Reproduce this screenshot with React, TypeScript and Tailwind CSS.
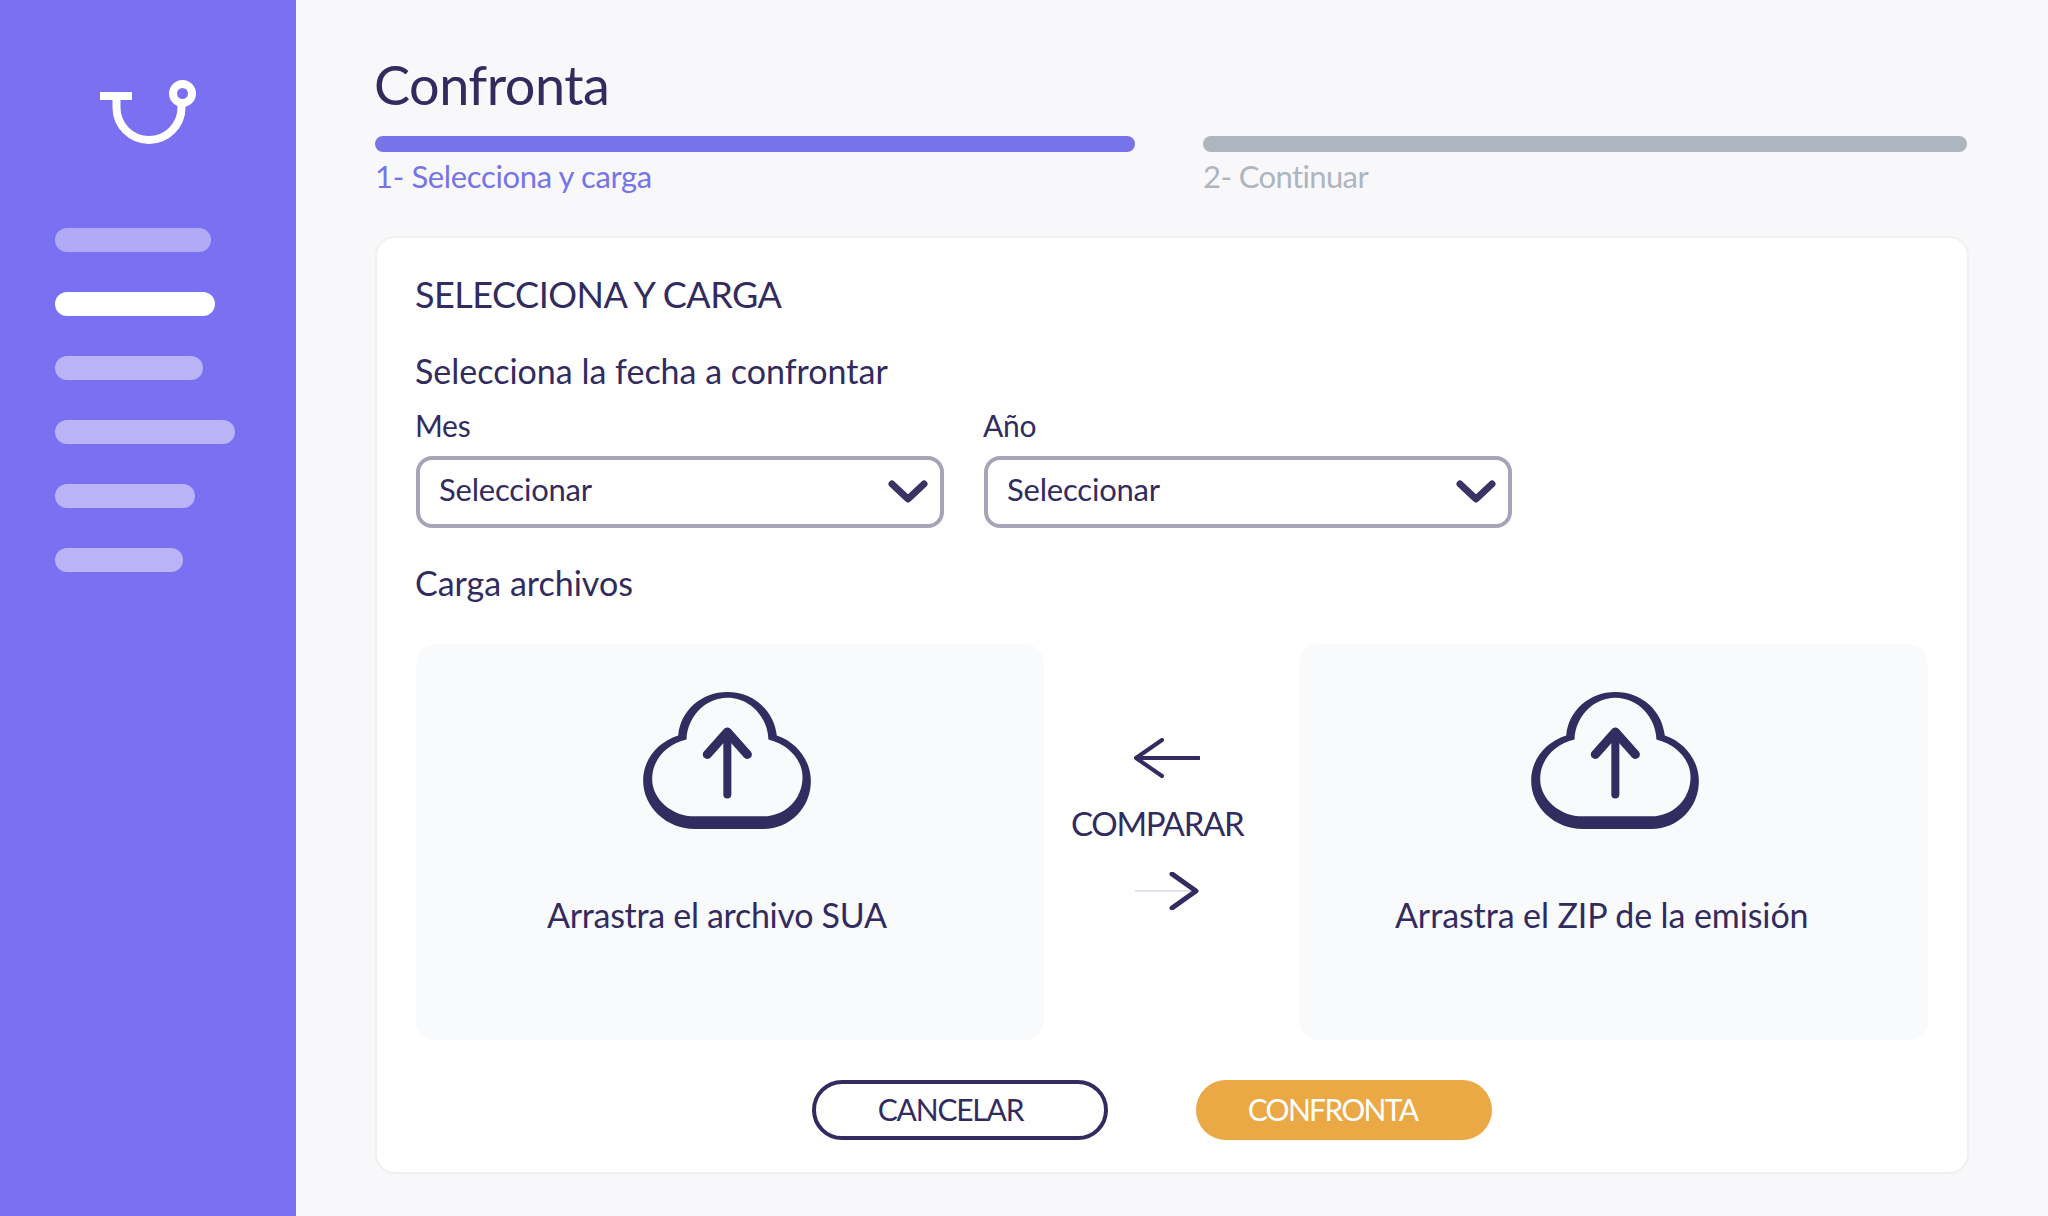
const navBars = [
  { width: 'w-[156px]', color: 'bg-[#b1aaf6]' },
  { width: 'w-[160px]', color: 'bg-white' },
  { width: 'w-[148px]', color: 'bg-[#bab4f7]' },
  { width: 'w-[180px]', color: 'bg-[#bab4f7]' },
  { width: 'w-[140px]', color: 'bg-[#bab4f7]' },
  { width: 'w-[128px]', color: 'bg-[#bab4f7]' },
];

const Logo = () => (
  <svg width="96" height="64" viewBox="100 80 96 64" fill="none">
    <rect x="100" y="92" width="32" height="8" fill="#fff" />
    <path d="M116.5 96V107.5A32.5 32.5 0 0 0 181.5 107.5V103" stroke="#fff" strokeWidth="8" />
    <circle cx="182.5" cy="93.5" r="9.5" stroke="#fff" strokeWidth="8" />
  </svg>
);

const Chevron = () => (
  <svg width="40" height="24" viewBox="0 0 40 24" fill="none">
    <path d="M4 4L20 19L36 4" stroke="#3a3363" strokeWidth="7" strokeLinecap="round" strokeLinejoin="round" />
  </svg>
);

const Cloud = () => (
  <svg width="168" height="137" viewBox="130 95 502 410" fill="none">
    <path
      fillRule="evenodd"
      fill="#332c60"
      d="M235 225C242 150 305 95 382 95C460 95 522 150 530 225C590 245 632 300 632 362C632 440 570 505 490 505L285 505C200 505 130 440 130 360C130 298 172 245 235 225ZM260 237C262 170 315 112 382 112C450 112 503 170 505 237C565 252 607 298 607 350C607 415 555 467 490 467L285 467C215 467 157 415 157 355C157 298 200 250 260 237Z"
    />
    <path d="M382 402V215" stroke="#332c60" strokeWidth="24" strokeLinecap="round" />
    <path d="M322 282L382 215L442 282" stroke="#332c60" strokeWidth="27" strokeLinecap="round" strokeLinejoin="round" />
  </svg>
);

const SelectBox = ({ label }: { label: string }) => (
  <div className="w-[528px]">
    <div className="-ml-[1px] text-[30px] leading-[40px] tracking-[-0.3px]">{label}</div>
    <div className="mt-[11px] h-[72px] rounded-[16px] border-4 border-[#a6a5b8] pl-[19px] pr-[12px] flex items-center justify-between">
      <span className="pb-[6px] text-[31px] tracking-[-0.2px]">Seleccionar</span>
      <Chevron />
    </div>
  </div>
);

const App = () => {
  return (
    <div className="flex min-h-[1216px] bg-[#f8f8fa] text-[#322b5f] font-[Lato,sans-serif]">
      <aside className="w-[296px] shrink-0 bg-[#7b70f2]">
        <div className="pt-[80px] pl-[100px]">
          <Logo />
        </div>
        <nav className="mt-[84px] pl-[55px] flex flex-col gap-[40px]">
          {navBars.map((bar, i) => (
            <div key={i} className={`h-[24px] rounded-full ${bar.width} ${bar.color}`} />
          ))}
        </nav>
      </aside>

      <main className="flex-1 pl-[79px] pr-[81px] pt-[50px]">
        <h1 className="-ml-[1px] text-[54px] leading-[70px] tracking-[-0.5px]">Confronta</h1>

        <div className="mt-[16px] flex gap-[68px]">
          <div className="w-[760px]">
            <div className="h-[16px] rounded-full bg-[#7773e8]" />
            <div className="mt-[4px] text-[31px] leading-[40px] tracking-[-0.35px] text-[#7773e8]">1- Selecciona y carga</div>
          </div>
          <div className="w-[764px]">
            <div className="h-[16px] rounded-full bg-[#adb5be]" />
            <div className="mt-[4px] text-[31px] leading-[40px] tracking-[-0.6px] text-[#adb5be]">2- Continuar</div>
          </div>
        </div>

        <section className="mt-[40px] -mr-[2px] rounded-[20px] border-2 border-[#f0f0f0] bg-white pl-[39px] pr-[38px] pt-[36px] pb-[32px]">
          <h2 className="-ml-[1px] text-[36px] leading-[40px] tracking-[-0.5px]">SELECCIONA Y CARGA</h2>
          <h3 className="-ml-[1px] mt-[37px] text-[34px] leading-[40px]">Selecciona la fecha a confrontar</h3>

          <div className="mt-[14px] flex gap-[40px]">
            <SelectBox label="Mes" />
            <SelectBox label="Año" />
          </div>

          <h3 className="-ml-[1px] mt-[35px] text-[34px] leading-[40px]">Carga archivos</h3>

          <div className="mt-[41px] flex">
            <div className="w-[628px] h-[396px] shrink-0 rounded-[20px] bg-[#f8fafc] pt-[48px] flex flex-col">
              <div className="pl-[227px]"><Cloud /></div>
              <div className="mt-[66px] pl-[131px] text-[34px] leading-[40px] tracking-[-0.3px]">Arrastra el archivo SUA</div>
            </div>

            <div className="w-[255px] shrink-0 flex flex-col">
              <div className="mt-[94px] pl-[90px]">
                <svg width="66" height="40" viewBox="0 0 66 40" fill="none">
                  <path d="M65 20H2M28 2L2 20L28 38" stroke="#332c60" strokeWidth="4" strokeLinecap="round" strokeLinejoin="round" />
                </svg>
              </div>
              <div className="mt-[25px] pl-[27px] text-[33px] leading-[40px] tracking-[-1.3px]">COMPARAR</div>
              <div className="mt-[29px] pl-[91px]">
                <svg width="64" height="38" viewBox="0 0 64 38" fill="none">
                  <path d="M0 19H60" stroke="#c5c3d8" strokeWidth="1" />
                  <path d="M37 2L61 19L37 36" stroke="#332c60" strokeWidth="5" strokeLinecap="round" strokeLinejoin="round" />
                </svg>
              </div>
            </div>

            <div className="w-[629px] h-[396px] shrink-0 rounded-[20px] bg-[#f8fafc] pt-[48px] flex flex-col">
              <div className="pl-[232px]"><Cloud /></div>
              <div className="mt-[66px] pl-[96px] text-[34px] leading-[40px] tracking-[-0.1px]">Arrastra el ZIP de la emisión</div>
            </div>
          </div>

          <div className="mt-[40px] flex justify-center pr-[42px] gap-[88px]">
            <button className="w-[296px] h-[60px] rounded-full border-4 border-[#322b5f] pr-[18px] pb-[2px] text-[30px] tracking-[-1.2px]">CANCELAR</button>
            <button className="w-[296px] h-[60px] rounded-full bg-[#eaa945] text-white pr-[22px] pb-[2px] text-[30px] tracking-[-1.7px]">CONFRONTA</button>
          </div>
        </section>
      </main>
    </div>
  );
};

export default App;
